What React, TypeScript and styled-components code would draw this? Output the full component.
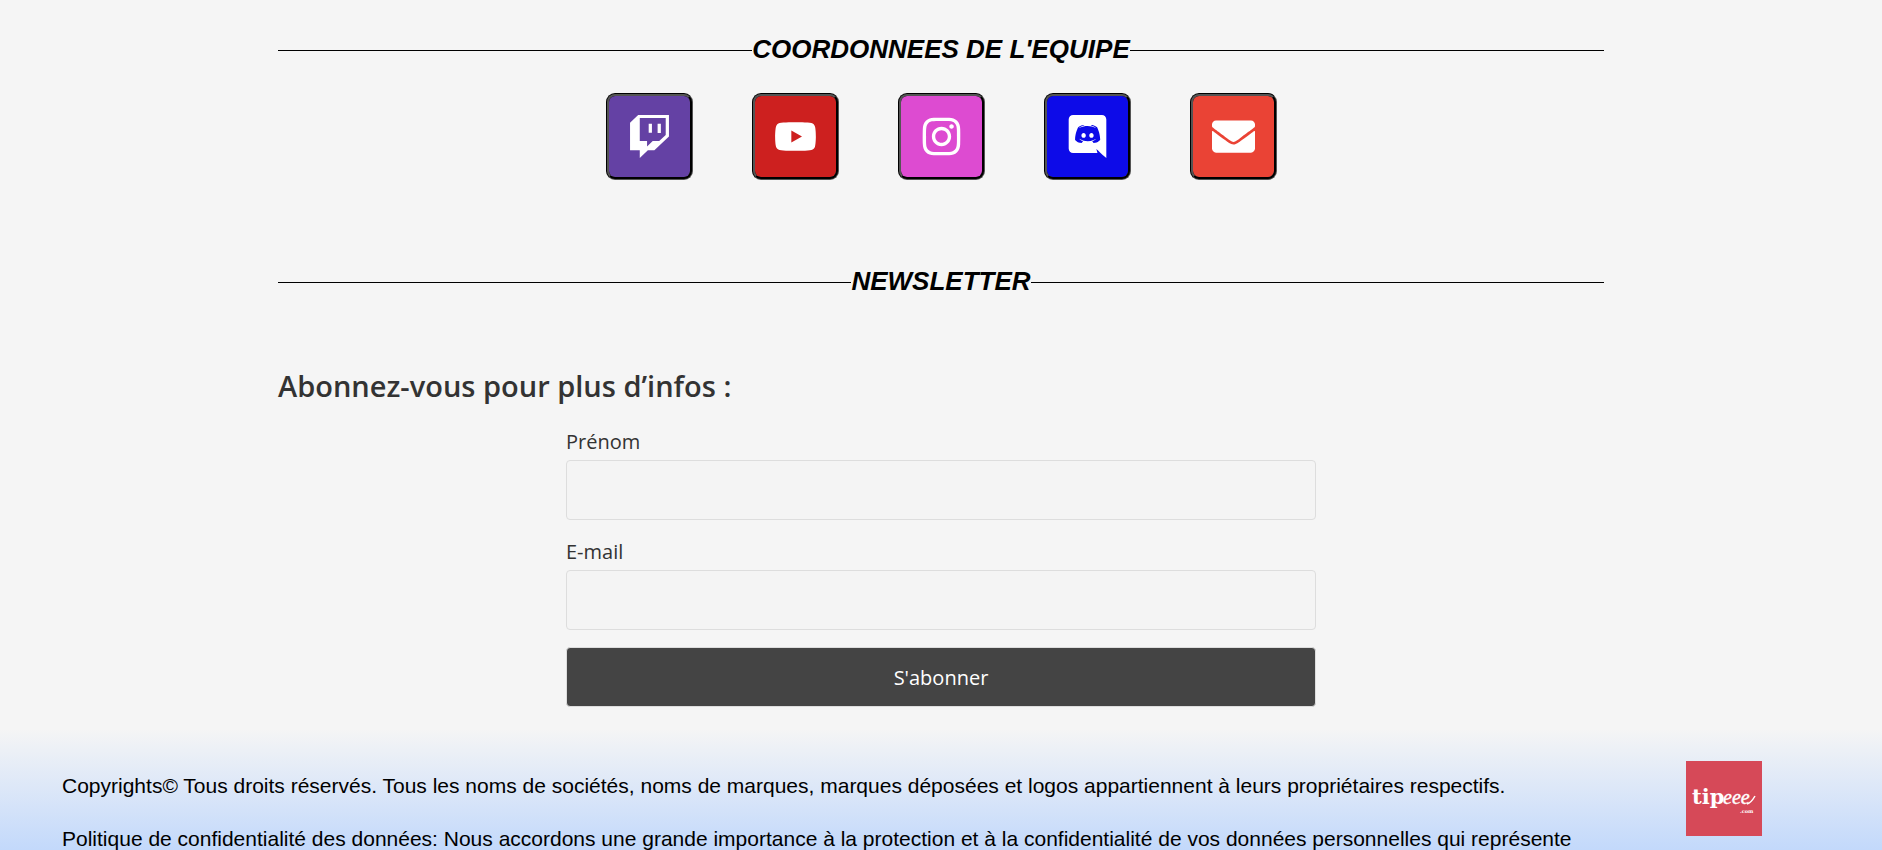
import React from "react";
import styled, { createGlobalStyle } from "styled-components";
import { FaTwitch, FaYoutube, FaInstagram, FaEnvelope } from "react-icons/fa";

const GlobalStyle = createGlobalStyle`
  *, *::before, *::after { box-sizing: border-box; }
  html, body { margin: 0; background: #f5f5f5; }
  body { font-family: Arial, "Liberation Sans", sans-serif; color: #000; }
`;

const Page = styled.div`
  display: flex;
  flex-direction: column;
  height: 100vh;
  overflow: hidden;
`;

const Section = styled.section<{ $top: number }>`
  width: 100%;
  max-width: 1326px;
  margin: 0 auto;
  padding-top: ${({ $top }) => $top}px;
`;

const Divider = styled.h2`
  display: flex;
  align-items: center;
  margin: 0;
  font-size: 26px;
  line-height: 32px;
  font-style: italic;
  font-weight: 700;

  &::before,
  &::after {
    content: "";
    flex: 1;
    height: 1px;
    margin-top: 2px;
    background: #000;
  }
`;

const Socials = styled.nav`
  display: flex;
  justify-content: center;
  gap: 59px;
  margin-top: 28px;
`;

const SocialLink = styled.a<{ $color: string }>`
  display: flex;
  align-items: center;
  justify-content: center;
  width: 87px;
  height: 87px;
  border: 3px groove #000;
  border-radius: 9px;
  background: ${({ $color }) => $color};
  color: #fff;
  font-size: 43px;
`;

const FormTitle = styled.h3`
  margin: 0;
  font-family: "Segoe UI", "Open Sans", "Noto Sans", sans-serif;
  font-size: 29px;
  line-height: 40px;
  font-weight: 600;
  color: #333;
`;

const Form = styled.form`
  display: flex;
  flex-direction: column;
  gap: 17px;
  max-width: 750px;
  margin: 21px auto 0;
  font-family: "Segoe UI", "Open Sans", "Noto Sans", sans-serif;
  font-size: 20px;
  color: #333;
`;

const Field = styled.label`
  display: flex;
  flex-direction: column;
  gap: 4px;
  line-height: 29px;
`;

const Input = styled.input`
  height: 60px;
  padding: 0 16px;
  border: 1px solid #ddd;
  border-radius: 4px;
  background: #f4f4f4;
  font: inherit;
  color: inherit;
`;

const Submit = styled.button`
  height: 60px;
  border: 1px solid #ddd;
  border-radius: 4px;
  background: #444;
  color: #fff;
  font: inherit;
  cursor: pointer;
`;

const Footer = styled.footer`
  display: flex;
  flex: 1 0 auto;
  align-items: flex-start;
  justify-content: space-between;
  margin-top: 22px;
  padding: 32px 120px 0 62px;
  background: linear-gradient(#f5f5f5, #c3d9fb 120px);
`;

const Legal = styled.div`
  font-size: 21px;
  line-height: 23px;
`;

const Paragraph = styled.p`
  margin: 13px 0 30px;
`;

const TipLink = styled.a`
  display: block;
  flex: none;
  width: 76px;
  height: 75px;
  background: #d64958;

  svg { display: block; width: 100%; height: 100%; }
`;

const DiscordIcon = () => (
  <svg viewBox="0 0 448 512" width="1em" height="1em" fill="currentColor" aria-hidden="true">
    <path d="M297.216 243.2c0 15.616-11.52 28.416-26.112 28.416-14.336 0-26.112-12.8-26.112-28.416s11.52-28.416 26.112-28.416c14.592 0 26.112 12.8 26.112 28.416zm-119.552-28.416c-14.592 0-26.112 12.8-26.112 28.416s11.776 28.416 26.112 28.416c14.592 0 26.112-12.8 26.112-28.416.256-15.616-11.52-28.416-26.112-28.416zM448 52.736V512c-64.494-56.994-43.868-38.128-118.784-107.776l13.568 47.36H52.48C23.296 451.584 0 427.52 0 398.08V52.736C0 23.552 23.296 0 52.48 0h343.04C424.704 0 448 23.552 448 52.736zm-72.96 242.688c0-82.432-36.864-149.248-36.864-149.248-36.864-27.648-71.936-26.88-71.936-26.88l-3.584 4.096c43.52 13.312 63.744 32.512 63.744 32.512-60.811-33.329-132.244-33.335-191.232-7.424-9.472 4.352-15.104 7.424-15.104 7.424s21.248-20.224 67.328-33.536l-2.56-3.072s-35.072-.768-71.936 26.88c0 0-36.864 66.816-36.864 149.248 0 0 21.504 37.12 78.08 38.912 0 0 9.472-11.52 17.152-21.248-32.512-9.728-44.8-30.208-44.8-30.208 3.766 2.636 9.976 6.053 10.496 6.4 43.21 24.198 104.588 32.126 159.744 8.96 8.96-3.328 18.944-8.192 29.44-15.104 0 0-12.8 20.992-46.336 30.464 7.68 9.728 16.896 20.736 16.896 20.736 56.576-1.792 78.336-38.912 78.336-38.912z" />
  </svg>
);

const TipeeeLogo = () => (
  <svg viewBox="0 0 76 75" fill="#fff" aria-hidden="true">
    <text x="6" y="43" fontFamily="'DejaVu Serif', serif" fontWeight="700" fontSize="21">tip</text>
    <text x="37" y="43" fontFamily="'Liberation Serif', serif" fontStyle="italic" fontSize="20" stroke="#fff" strokeWidth="0.4">eee</text>
    <path d="M61 43 Q65 42 69 35" fill="none" stroke="#fff" strokeWidth="1.5" />
    <text x="54" y="52" fontFamily="'DejaVu Serif', serif" fontWeight="700" fontSize="5">.com</text>
  </svg>
);

const socials = [
  { name: "Twitch", color: "#6441a4", icon: <FaTwitch /> },
  { name: "YouTube", color: "#cd201f", icon: <FaYoutube /> },
  { name: "Instagram", color: "#dd4bd1", icon: <FaInstagram /> },
  { name: "Discord", color: "#0d0be8", icon: <DiscordIcon /> },
  { name: "E-mail", color: "#ea4335", icon: <FaEnvelope /> },
];

export default function App() {
  return (
    <Page>
      <GlobalStyle />
      <Section $top={33}>
        <Divider>COORDONNEES DE L'EQUIPE</Divider>
        <Socials>
          {socials.map((s) => (
            <SocialLink key={s.name} href="#" aria-label={s.name} $color={s.color}>
              {s.icon}
            </SocialLink>
          ))}
        </Socials>
      </Section>
      <Section $top={85}>
        <Divider>NEWSLETTER</Divider>
      </Section>
      <Section $top={69}>
        <FormTitle>Abonnez-vous pour plus d’infos :</FormTitle>
        <Form>
          <Field>
            Prénom
            <Input type="text" name="firstname" />
          </Field>
          <Field>
            E-mail
            <Input type="email" name="email" />
          </Field>
          <Submit type="button">S'abonner</Submit>
        </Form>
      </Section>
      <Footer>
        <Legal>
          <Paragraph>
            Copyrights© Tous droits réservés. Tous les noms de sociétés, noms de marques, marques déposées et logos
            appartiennent à leurs propriétaires respectifs.
          </Paragraph>
          <Paragraph>
            Politique de confidentialité des données: Nous accordons une grande importance à la protection et à la
            confidentialité de vos données personnelles qui représente
          </Paragraph>
        </Legal>
        <TipLink href="#" aria-label="Tipeee">
          <TipeeeLogo />
        </TipLink>
      </Footer>
    </Page>
  );
}
